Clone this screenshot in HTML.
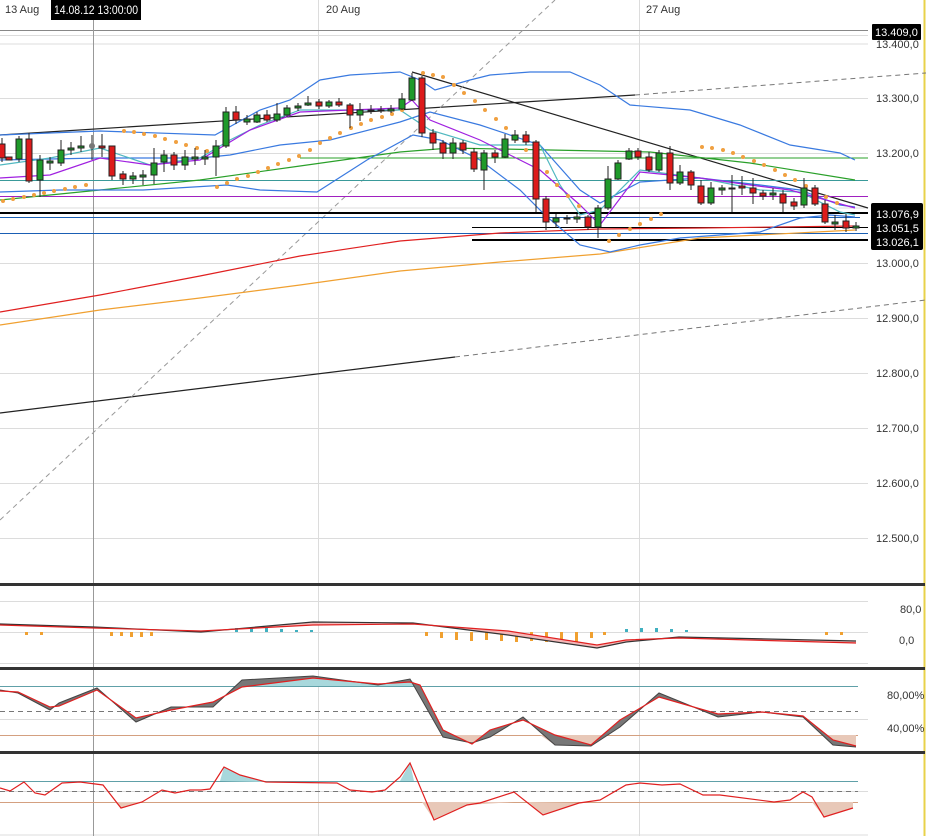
<!DOCTYPE html>
<html><head><meta charset="utf-8"><style>
html,body{margin:0;padding:0;background:#fff;width:926px;height:836px;overflow:hidden}
svg{display:block;font-family:"Liberation Sans",sans-serif}
</style></head><body>
<svg width="926" height="836" viewBox="0 0 926 836" xmlns="http://www.w3.org/2000/svg">
<rect width="926" height="836" fill="#fff"/>
<g stroke="#dcdcdc" stroke-width="1">
<line x1="0" y1="44" x2="868" y2="44"/><line x1="0" y1="98.5" x2="868" y2="98.5"/><line x1="0" y1="153.5" x2="868" y2="153.5"/>
<line x1="0" y1="208" x2="868" y2="208"/><line x1="0" y1="263.5" x2="868" y2="263.5"/><line x1="0" y1="318.5" x2="868" y2="318.5"/>
<line x1="0" y1="373.5" x2="868" y2="373.5"/><line x1="0" y1="428.5" x2="868" y2="428.5"/><line x1="0" y1="483.5" x2="868" y2="483.5"/>
<line x1="0" y1="538.5" x2="868" y2="538.5"/>
<line x1="318.5" y1="0" x2="318.5" y2="836"/><line x1="639.5" y1="0" x2="639.5" y2="836"/>
<line x1="0" y1="35.5" x2="868" y2="35.5"/>
<line x1="0" y1="601.5" x2="868" y2="601.5"/><line x1="0" y1="632.5" x2="868" y2="632.5"/><line x1="0" y1="663.5" x2="868" y2="663.5"/>
<line x1="0" y1="719.5" x2="868" y2="719.5"/><line x1="0" y1="791.5" x2="868" y2="791.5"/><line x1="0" y1="835" x2="868" y2="835"/>
</g>
<line x1="0" y1="30.5" x2="868" y2="30.5" stroke="#888"/>
<line x1="93.5" y1="20" x2="93.5" y2="836" stroke="#999"/>
<line x1="924.5" y1="0" x2="924.5" y2="836" stroke="#e8d24a" stroke-width="2"/>
<line x1="0" y1="413" x2="455" y2="357" stroke="#222" stroke-width="1.2"/>
<line x1="455" y1="357" x2="926" y2="300" stroke="#777" stroke-dasharray="5,4"/>
<line x1="0" y1="135" x2="635" y2="95" stroke="#222" stroke-width="1.2"/>
<line x1="635" y1="95" x2="926" y2="73" stroke="#777" stroke-dasharray="5,4"/>
<line x1="412" y1="72" x2="868" y2="208" stroke="#222" stroke-width="1.2"/>
<line x1="0" y1="520" x2="555" y2="0" stroke="#999" stroke-dasharray="5,4"/>
<line x1="300" y1="158" x2="868" y2="158" stroke="#2aa02a"/>
<line x1="0" y1="180.5" x2="868" y2="180.5" stroke="#3a9a9a"/>
<line x1="0" y1="196.5" x2="868" y2="196.5" stroke="#a020c0"/>
<line x1="0" y1="213" x2="868" y2="213" stroke="#000" stroke-width="2"/>
<line x1="0" y1="217.5" x2="860" y2="217.5" stroke="#1a5fb4"/>
<line x1="0" y1="233.5" x2="868" y2="233.5" stroke="#1a5fb4"/>
<line x1="472" y1="227.5" x2="868" y2="227.5" stroke="#000"/>
<line x1="472" y1="240" x2="868" y2="240" stroke="#000" stroke-width="2"/>
<polyline fill="none" stroke="#e02020" stroke-width="1.2" points="0,312 100,295 200,276 300,256 400,241 500,233 600,229 700,228 855,226"/>
<polyline fill="none" stroke="#f0a030" stroke-width="1.2" points="0,325 100,310 200,298 300,285 400,271 500,262 600,254 700,238 855,230"/>
<polyline fill="none" stroke="#2aa02a" stroke-width="1.2" points="0,200 100,190 200,180 300,166 400,152 450,148 550,150 650,152 750,163 855,180"/>
<polyline fill="none" stroke="#3a7ae0" stroke-width="1.2" points="0,135 100,131 215,135 260,110 290,100 320,80 350,75 400,72 420,80 435,90 470,80 490,75 530,72 570,72 600,85 630,105 690,110 740,125 790,145 840,153 855,160"/>
<polyline fill="none" stroke="#3a7ae0" stroke-width="1.2" points="0,192 60,190 143,190 227,185 260,190 317,192 367,160 413,135 440,140 480,160 520,190 545,215 580,245 610,252 640,245 680,238 760,232 800,218 830,215 855,217"/>
<polyline fill="none" stroke="#3a7ae0" stroke-width="1.2" points="0,160 100,158 200,158 230,155 280,145 330,140 400,122 430,112 480,125 540,145 580,190 600,203 640,182 700,178 760,185 800,190 840,205 855,207"/>
<polyline fill="none" stroke="#50b8c0" stroke-width="1.2" points="0,165 50,158 100,148 150,165 200,158 230,140 260,125 300,110 400,110 430,130 480,145 540,145 560,185 580,215 600,210 640,170 700,178 760,190 800,192 840,212 855,215"/>
<polyline fill="none" stroke="#a020e0" stroke-width="1.2" points="0,178 50,175 100,158 150,165 200,160 250,130 300,112 400,108 412,100 430,120 480,140 540,170 580,205 600,225 640,172 700,178 750,185 790,190 855,208"/>
<g fill="#f0a040">
<circle cx="3" cy="201" r="2"/><circle cx="13" cy="199" r="2"/><circle cx="24" cy="197" r="2"/><circle cx="34" cy="195" r="2"/><circle cx="44" cy="193" r="2"/><circle cx="54" cy="191" r="2"/><circle cx="65" cy="189" r="2"/><circle cx="75" cy="187" r="2"/><circle cx="86" cy="185" r="2"/>
<circle cx="124" cy="131" r="2"/><circle cx="134" cy="132" r="2"/><circle cx="144" cy="134" r="2"/><circle cx="155" cy="136" r="2"/><circle cx="165" cy="139" r="2"/><circle cx="176" cy="142" r="2"/><circle cx="186" cy="145" r="2"/><circle cx="197" cy="148" r="2"/><circle cx="207" cy="151" r="2"/>
<circle cx="217" cy="187" r="2"/><circle cx="227" cy="183" r="2"/><circle cx="237" cy="179" r="2"/><circle cx="248" cy="176" r="2"/><circle cx="258" cy="172" r="2"/><circle cx="268" cy="168" r="2"/><circle cx="278" cy="164" r="2"/><circle cx="289" cy="160" r="2"/><circle cx="299" cy="156" r="2"/><circle cx="310" cy="150" r="2"/><circle cx="320" cy="143" r="2"/><circle cx="330" cy="138" r="2"/><circle cx="340" cy="133" r="2"/><circle cx="351" cy="128" r="2"/><circle cx="361" cy="124" r="2"/><circle cx="371" cy="120" r="2"/><circle cx="382" cy="117" r="2"/><circle cx="392" cy="114" r="2"/><circle cx="402" cy="110" r="2"/>
<circle cx="423" cy="73" r="2"/><circle cx="433" cy="75" r="2"/><circle cx="443" cy="77" r="2"/><circle cx="454" cy="85" r="2"/><circle cx="464" cy="93" r="2"/><circle cx="475" cy="101" r="2"/><circle cx="485" cy="110" r="2"/><circle cx="496" cy="119" r="2"/><circle cx="506" cy="128" r="2"/><circle cx="516" cy="139" r="2"/><circle cx="526" cy="150" r="2"/><circle cx="537" cy="161" r="2"/><circle cx="547" cy="172" r="2"/><circle cx="557" cy="185" r="2"/><circle cx="568" cy="196" r="2"/><circle cx="579" cy="206" r="2"/>
<circle cx="609" cy="241" r="2"/><circle cx="619" cy="235" r="2"/><circle cx="630" cy="229" r="2"/><circle cx="640" cy="224" r="2"/><circle cx="651" cy="219" r="2"/><circle cx="661" cy="214" r="2"/>
<circle cx="702" cy="147" r="2"/><circle cx="712" cy="148" r="2"/><circle cx="723" cy="150" r="2"/><circle cx="733" cy="153" r="2"/><circle cx="743" cy="157" r="2"/><circle cx="754" cy="161" r="2"/><circle cx="764" cy="165" r="2"/><circle cx="775" cy="170" r="2"/><circle cx="785" cy="175" r="2"/><circle cx="795" cy="180" r="2"/><circle cx="806" cy="186" r="2"/><circle cx="816" cy="191" r="2"/><circle cx="826" cy="197" r="2"/><circle cx="837" cy="203" r="2"/>
</g>
<g stroke="#222" stroke-width="1">
<line x1="2" y1="138" x2="2" y2="162"/><line x1="19" y1="136" x2="19" y2="162"/><line x1="29" y1="133" x2="29" y2="183"/><line x1="40" y1="155" x2="40" y2="197"/><line x1="50" y1="157" x2="50" y2="170"/><line x1="61" y1="140" x2="61" y2="166"/><line x1="71" y1="142" x2="71" y2="155"/><line x1="81" y1="136" x2="81" y2="152"/><line x1="92" y1="135" x2="92" y2="160"/><line x1="102" y1="134" x2="102" y2="157"/><line x1="112" y1="146" x2="112" y2="180"/><line x1="123" y1="171" x2="123" y2="185"/><line x1="133" y1="172" x2="133" y2="184"/><line x1="143" y1="170" x2="143" y2="185"/><line x1="154" y1="148" x2="154" y2="184"/><line x1="164" y1="150" x2="164" y2="172"/><line x1="174" y1="152" x2="174" y2="170"/><line x1="185" y1="150" x2="185" y2="170"/><line x1="195" y1="148" x2="195" y2="165"/><line x1="205" y1="150" x2="205" y2="165"/><line x1="216" y1="140" x2="216" y2="176"/><line x1="226" y1="107" x2="226" y2="148"/><line x1="236" y1="106" x2="236" y2="124"/><line x1="247" y1="115" x2="247" y2="125"/><line x1="257" y1="112" x2="257" y2="123"/><line x1="267" y1="110" x2="267" y2="122"/><line x1="277" y1="103" x2="277" y2="122"/><line x1="287" y1="105" x2="287" y2="117"/><line x1="298" y1="103" x2="298" y2="111"/><line x1="308" y1="96" x2="308" y2="106"/><line x1="319" y1="99" x2="319" y2="109"/><line x1="329" y1="100" x2="329" y2="108"/><line x1="339" y1="98" x2="339" y2="107"/><line x1="350" y1="103" x2="350" y2="128"/><line x1="360" y1="103" x2="360" y2="121"/><line x1="371" y1="105" x2="371" y2="114"/><line x1="381" y1="106" x2="381" y2="113"/><line x1="391" y1="105" x2="391" y2="113"/><line x1="402" y1="93" x2="402" y2="110"/><line x1="412" y1="73" x2="412" y2="101"/><line x1="422" y1="76" x2="422" y2="137"/><line x1="433" y1="129" x2="433" y2="150"/><line x1="443" y1="140" x2="443" y2="159"/><line x1="453" y1="138" x2="453" y2="159"/><line x1="463" y1="140" x2="463" y2="154"/><line x1="474" y1="148" x2="474" y2="172"/><line x1="484" y1="150" x2="484" y2="190"/><line x1="495" y1="150" x2="495" y2="163"/><line x1="505" y1="134" x2="505" y2="158"/><line x1="515" y1="130" x2="515" y2="143"/><line x1="526" y1="131" x2="526" y2="145"/><line x1="536" y1="140" x2="536" y2="212"/><line x1="546" y1="196" x2="546" y2="230"/><line x1="556" y1="214" x2="556" y2="228"/><line x1="567" y1="215" x2="567" y2="224"/><line x1="577" y1="214" x2="577" y2="223"/><line x1="588" y1="215" x2="588" y2="230"/><line x1="598" y1="205" x2="598" y2="238"/><line x1="608" y1="166" x2="608" y2="210"/><line x1="618" y1="160" x2="618" y2="180"/><line x1="629" y1="148" x2="629" y2="160"/><line x1="638" y1="148" x2="638" y2="160"/><line x1="649" y1="152" x2="649" y2="172"/><line x1="659" y1="150" x2="659" y2="172"/><line x1="670" y1="146" x2="670" y2="190"/><line x1="680" y1="165" x2="680" y2="185"/><line x1="691" y1="170" x2="691" y2="190"/><line x1="701" y1="180" x2="701" y2="205"/><line x1="711" y1="182" x2="711" y2="205"/><line x1="722" y1="185" x2="722" y2="195"/><line x1="732" y1="175" x2="732" y2="212"/><line x1="742" y1="176" x2="742" y2="195"/><line x1="753" y1="178" x2="753" y2="204"/><line x1="763" y1="190" x2="763" y2="200"/><line x1="773" y1="188" x2="773" y2="200"/><line x1="783" y1="190" x2="783" y2="212"/><line x1="794" y1="198" x2="794" y2="210"/><line x1="804" y1="178" x2="804" y2="208"/><line x1="815" y1="185" x2="815" y2="206"/><line x1="825" y1="200" x2="825" y2="224"/><line x1="835" y1="215" x2="835" y2="230"/><line x1="846" y1="214" x2="846" y2="232"/><line x1="856" y1="222" x2="856" y2="231"/>
</g>
<g stroke="#222" stroke-width="1">
<g fill="#dd1b1b">
<rect x="-1" y="144" width="6" height="14"/><rect x="6" y="157" width="6" height="3"/><rect x="26" y="139" width="6" height="42"/><rect x="99" y="146" width="6" height="2"/><rect x="109" y="146" width="6" height="30"/><rect x="120" y="174" width="6" height="5"/><rect x="171" y="155" width="6" height="10"/><rect x="233" y="112" width="6" height="8"/><rect x="264" y="115" width="6" height="5"/><rect x="316" y="102" width="6" height="4"/><rect x="336" y="102" width="6" height="3"/><rect x="347" y="105" width="6" height="10"/><rect x="419" y="78" width="6" height="55"/><rect x="430" y="133" width="6" height="10"/><rect x="440" y="143" width="6" height="10"/><rect x="460" y="143" width="6" height="7"/><rect x="471" y="152" width="6" height="17"/><rect x="492" y="153" width="6" height="4"/><rect x="523" y="135" width="6" height="7"/><rect x="533" y="142" width="6" height="57"/><rect x="543" y="199" width="6" height="23"/><rect x="585" y="217" width="6" height="10"/><rect x="635" y="151" width="6" height="6"/><rect x="646" y="157" width="6" height="13"/><rect x="667" y="153" width="6" height="30"/><rect x="688" y="172" width="6" height="13"/><rect x="698" y="186" width="6" height="17"/><rect x="739" y="186" width="6" height="2"/><rect x="750" y="188" width="6" height="5"/><rect x="760" y="193" width="6" height="3"/><rect x="780" y="194" width="6" height="9"/><rect x="791" y="202" width="6" height="4"/><rect x="812" y="188" width="6" height="16"/><rect x="822" y="204" width="6" height="18"/><rect x="843" y="221" width="6" height="7"/>
</g>
<g fill="#1f9a2a">
<rect x="16" y="139" width="6" height="20"/><rect x="37" y="160" width="6" height="20"/><rect x="47" y="161" width="6" height="2"/><rect x="58" y="150" width="6" height="13"/><rect x="68" y="148" width="6" height="2"/><rect x="78" y="146" width="6" height="2"/><rect x="130" y="176" width="6" height="3"/><rect x="140" y="175" width="6" height="2"/><rect x="151" y="163" width="6" height="12"/><rect x="161" y="155" width="6" height="7"/><rect x="182" y="157" width="6" height="8"/><rect x="192" y="157" width="6" height="2"/><rect x="202" y="157" width="6" height="2"/><rect x="213" y="146" width="6" height="11"/><rect x="223" y="112" width="6" height="34"/><rect x="244" y="119" width="6" height="3"/><rect x="254" y="115" width="6" height="7"/><rect x="274" y="114" width="6" height="6"/><rect x="284" y="108" width="6" height="7"/><rect x="295" y="106" width="6" height="2"/><rect x="305" y="103" width="6" height="2"/><rect x="326" y="102" width="6" height="4"/><rect x="357" y="110" width="6" height="5"/><rect x="368" y="110" width="6" height="1"/><rect x="378" y="110" width="6" height="1"/><rect x="388" y="109" width="6" height="2"/><rect x="399" y="99" width="6" height="10"/><rect x="409" y="78" width="6" height="22"/><rect x="450" y="143" width="6" height="10"/><rect x="481" y="153" width="6" height="17"/><rect x="502" y="139" width="6" height="18"/><rect x="512" y="135" width="6" height="5"/><rect x="553" y="218" width="6" height="4"/><rect x="564" y="218" width="6" height="1"/><rect x="574" y="217" width="6" height="2"/><rect x="595" y="208" width="6" height="19"/><rect x="605" y="179" width="6" height="29"/><rect x="615" y="163" width="6" height="16"/><rect x="626" y="151" width="6" height="8"/><rect x="656" y="153" width="6" height="17"/><rect x="677" y="172" width="6" height="11"/><rect x="708" y="188" width="6" height="15"/><rect x="719" y="188" width="6" height="2"/><rect x="729" y="188" width="6" height="1"/><rect x="770" y="193" width="6" height="2"/><rect x="801" y="188" width="6" height="17"/><rect x="832" y="222" width="6" height="2"/><rect x="853" y="226" width="6" height="2"/>
</g>
<circle cx="92" cy="146" r="3" fill="#777" stroke="none"/>
</g>
<g font-size="11" fill="#333">
<text x="876" y="48">13.400,0</text><text x="876" y="102">13.300,0</text><text x="876" y="157">13.200,0</text>
<text x="876" y="267">13.000,0</text><text x="876" y="322">12.900,0</text><text x="876" y="377">12.800,0</text>
<text x="876" y="432">12.700,0</text><text x="876" y="487">12.600,0</text><text x="876" y="542">12.500,0</text>
<text x="5" y="13">13 Aug</text><text x="326" y="13">20 Aug</text><text x="646" y="13">27 Aug</text>
</g>
<rect x="51" y="0" width="90" height="20" fill="#000"/>
<text x="54" y="14" font-size="11.5" fill="#fff" textLength="84" lengthAdjust="spacingAndGlyphs">14.08.12 13:00:00</text>
<rect x="872" y="24" width="49" height="16" fill="#000" rx="1"/>
<text x="875" y="36" font-size="11" fill="#fff">13.409,0</text>
<rect x="871" y="203" width="52" height="47" fill="#000" rx="2"/>
<text x="876" y="218" font-size="11" fill="#fff">13.076,9</text>
<text x="876" y="232" font-size="11" fill="#fff">13.051,5</text>
<text x="876" y="246" font-size="11" fill="#fff">13.026,1</text>
<rect x="0" y="583" width="925" height="3" fill="#333"/>
<rect x="0" y="667" width="925" height="3" fill="#333"/>
<rect x="0" y="751" width="925" height="3" fill="#333"/>
<g fill="#f0a030"><rect x="25" y="632" width="3" height="3"/><rect x="40" y="632" width="3" height="3"/><rect x="110" y="632" width="3" height="4"/><rect x="120" y="632" width="3" height="4"/><rect x="130" y="632" width="3" height="5"/><rect x="140" y="632" width="3" height="5"/><rect x="150" y="632" width="3" height="4"/><rect x="425" y="632" width="3" height="4"/><rect x="440" y="632" width="3" height="6"/><rect x="455" y="632" width="3" height="8"/><rect x="470" y="632" width="3" height="9"/><rect x="485" y="632" width="3" height="8"/><rect x="500" y="632" width="3" height="9"/><rect x="515" y="632" width="3" height="10"/><rect x="530" y="632" width="3" height="9"/><rect x="545" y="632" width="3" height="10"/><rect x="560" y="632" width="3" height="11"/><rect x="575" y="632" width="3" height="10"/><rect x="590" y="632" width="3" height="6"/><rect x="603" y="632" width="3" height="3"/><rect x="825" y="632" width="3" height="3"/><rect x="840" y="632" width="3" height="3"/></g>
<g fill="#40b0c0"><rect x="235" y="628" width="3" height="4"/><rect x="250" y="628" width="3" height="4"/><rect x="265" y="628" width="3" height="4"/><rect x="280" y="629" width="3" height="3"/><rect x="295" y="630" width="3" height="2"/><rect x="310" y="630" width="3" height="2"/><rect x="625" y="629" width="3" height="3"/><rect x="640" y="628" width="3" height="4"/><rect x="655" y="628" width="3" height="4"/><rect x="670" y="629" width="3" height="3"/><rect x="685" y="630" width="3" height="2"/></g>
<polygon fill="#f4b8b8" points="0,624 94,627 201,632 313,622 413,623 508,635 597,648 626,642 679,637 856,641 856,643 679,638 626,640 597,645 508,631 413,624 313,625 201,631 94,628 0,625"/>
<polyline fill="none" stroke="#333" stroke-width="1.2" points="0,624 94,627 201,632 313,622 413,623 508,635 597,648 626,642 679,637 856,641"/>
<polyline fill="none" stroke="#e02020" stroke-width="1.2" points="0,625 94,628 201,631 313,625 413,624 508,631 597,645 626,640 679,638 856,643"/>
<text x="900" y="613" font-size="11" fill="#333">80,0</text>
<text x="899" y="644" font-size="11" fill="#333">0,0</text>
<line x1="0" y1="686.5" x2="858" y2="686.5" stroke="#60a0a8"/>
<line x1="0" y1="711.5" x2="858" y2="711.5" stroke="#777" stroke-dasharray="5,4"/>
<line x1="0" y1="735.5" x2="858" y2="735.5" stroke="#d4a080"/>
<polygon fill="#a8d8dc" points="242,686 245,680 313,676 378,685 410,679 418,686"/>
<polygon fill="#e8c8b8" points="440,735 472,743 490,737 496,735"/><polygon fill="#e8c8b8" points="540,735 555,745 591,746 605,735"/><polygon fill="#e8c8b8" points="825,735 833,745 856,747 856,735"/>
<polygon fill="#777" points="0,690 18,693 50,710 59,703 97,688 136,722 171,707 213,707 242,680 313,676 378,685 410,679 443,737 472,743 490,737 523,717 555,745 591,746 620,727 659,693 718,717 762,712 803,717 833,745 856,747 856,746 833,740 803,716 762,712 718,714 659,697 620,720 591,745 555,735 523,720 490,730 472,744 443,730 420,685 410,682 378,684 313,678 242,687 213,702 171,710 136,718 97,690 59,706 50,707 18,692 0,691"/>
<polyline fill="none" stroke="#444" stroke-width="1" points="0,690 18,693 50,710 59,703 97,688 136,722 171,707 213,707 242,680 313,676 378,685 410,679 443,737 472,743 490,737 523,717 555,745 591,746 620,727 659,693 718,717 762,712 803,717 833,745 856,747"/>
<polyline fill="none" stroke="#e02020" stroke-width="1.2" points="0,691 18,692 50,707 59,706 97,690 136,718 171,710 213,702 242,687 313,678 378,684 410,682 420,685 443,730 472,744 490,730 523,720 555,735 591,745 620,720 659,697 718,714 762,712 803,716 833,740 856,746"/>
<text x="887" y="699" font-size="11" fill="#333">80,00%</text>
<text x="887" y="732" font-size="11" fill="#333">40,00%</text>
<line x1="0" y1="781.5" x2="858" y2="781.5" stroke="#60a0a8"/>
<line x1="0" y1="791.5" x2="858" y2="791.5" stroke="#777" stroke-dasharray="5,4"/>
<line x1="0" y1="802.5" x2="858" y2="802.5" stroke="#d4a080"/>
<polygon fill="#a8d8dc" points="220,781 224,767 240,775 266,782"/><polygon fill="#a8d8dc" points="400,781 410,763 414,781"/>
<polygon fill="#e8c8b8" points="115,802 121,808 142,802"/><polygon fill="#e8c8b8" points="422,802 434,820 467,805 514,802"/><polygon fill="#e8c8b8" points="528,802 543,815 579,803"/><polygon fill="#e8c8b8" points="812,802 824,817 853,808 853,802"/>
<polyline fill="none" stroke="#e02020" stroke-width="1.2" points="0,788 10,791 24,782 35,793 45,795 62,783 80,782 103,785 121,808 142,802 162,790 175,793 190,790 201,790 210,789 224,767 240,775 266,782 337,783 350,790 372,792 385,790 400,777 410,763 434,820 467,805 480,803 514,792 543,815 579,803 600,800 626,785 640,783 662,785 680,784 703,795 720,795 774,802 790,800 803,792 812,797 824,817 853,808"/>
</svg>
</body></html>
